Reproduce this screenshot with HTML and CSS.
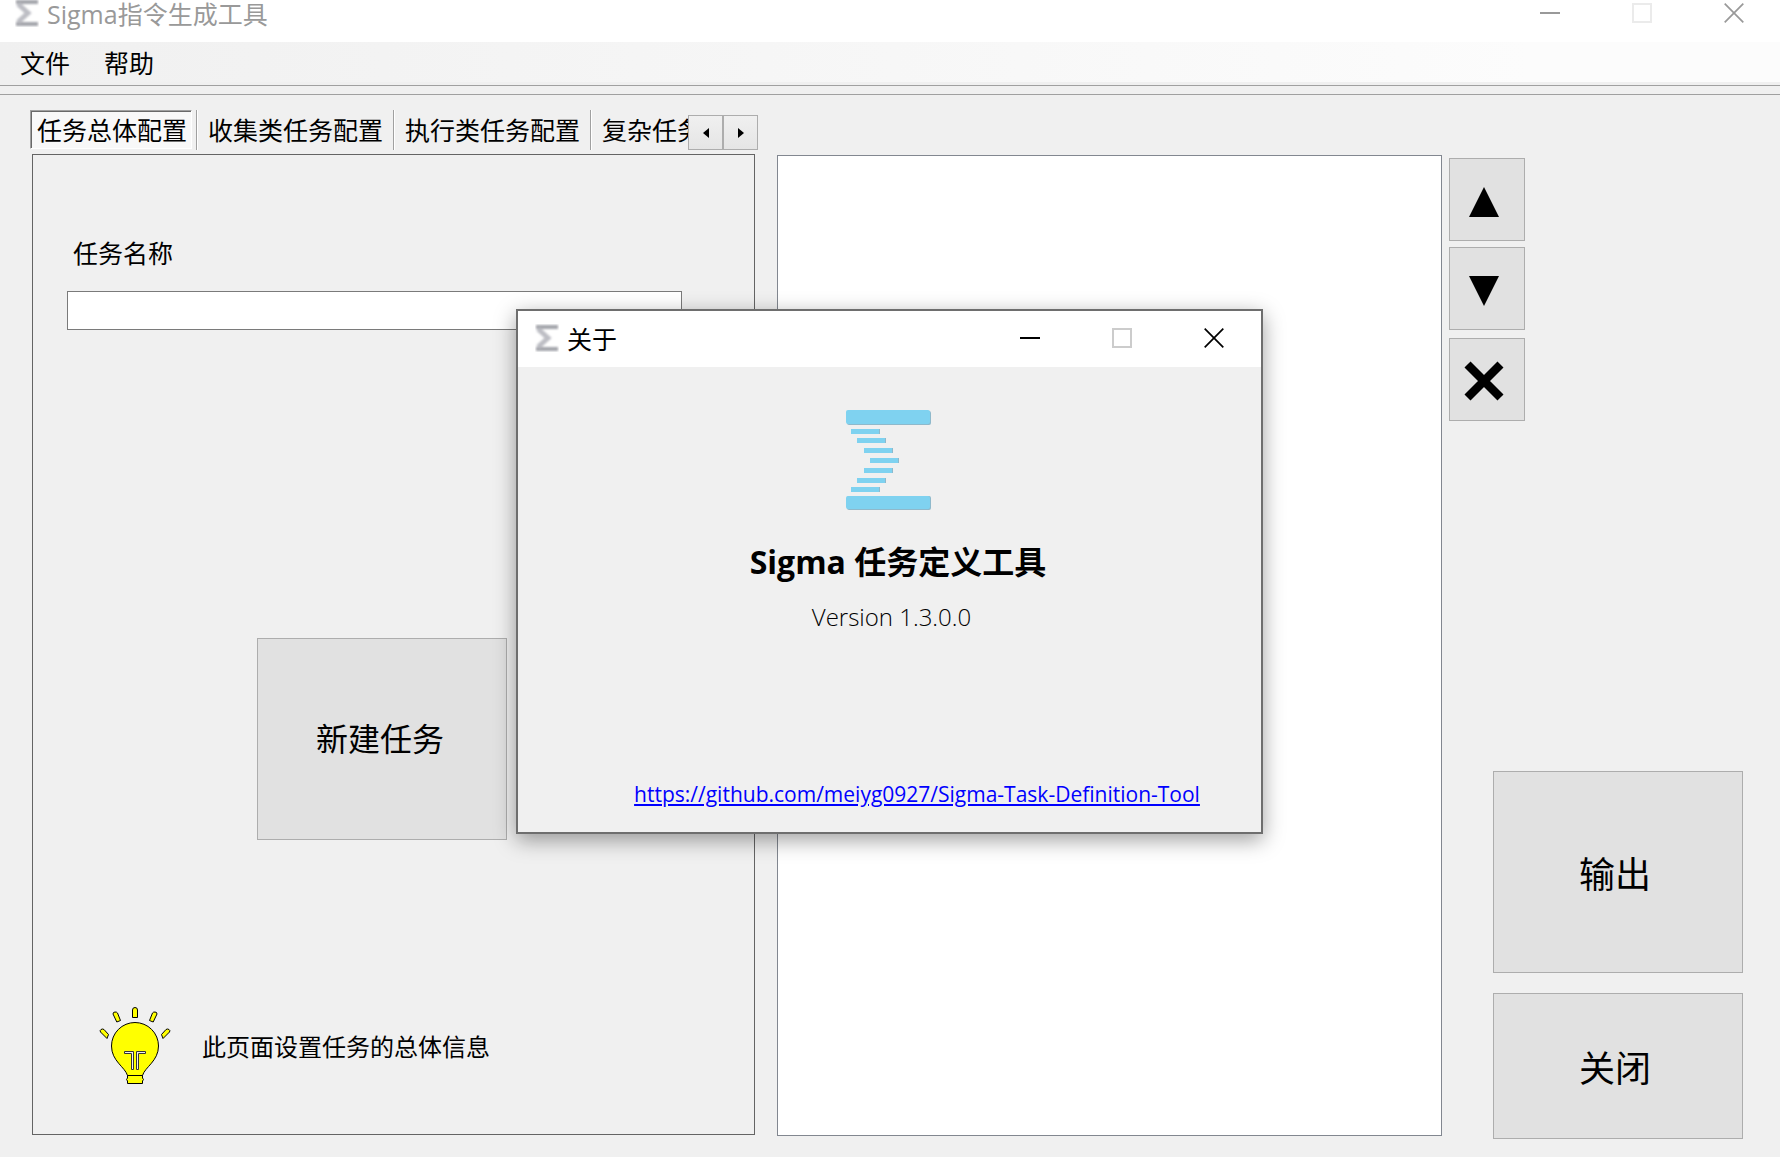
FILE: index.html
```html
<!DOCTYPE html>
<html lang="zh-CN">
<head>
<meta charset="utf-8">
<meta name="viewport" content="width=device-width, initial-scale=1">
<title>Sigma指令生成工具</title>
<link rel="stylesheet" href="styles.css">
</head>
<body>
<svg class="defs" width="0" height="0" aria-hidden="true">
  <defs>
    <filter id="soft" x="-20%" y="-20%" width="140%" height="140%"><feGaussianBlur stdDeviation="0.8"/></filter>
    <symbol id="sigma-small" viewBox="0 0 24 28">
      <g filter="url(#soft)" fill="none">
        <path d="M1 3H23M1 25H23" stroke="#a3a4aa" stroke-width="4"/>
        <path d="M3 5L13 14L3 23" stroke="#bdbec4" stroke-width="5"/>
      </g>
    </symbol>
    <symbol id="win-min" viewBox="0 0 20 20"><path d="M0 10H20" stroke="currentColor" stroke-width="2"/></symbol>
    <symbol id="win-max" viewBox="0 0 20 20"><rect x="1" y="1" width="18" height="18" fill="none" stroke="currentColor" stroke-width="2"/></symbol>
    <symbol id="win-close" viewBox="0 0 20 20"><path d="M.7 .7L19.3 19.3M19.3 .7L.7 19.3" stroke="currentColor" stroke-width="1.7"/></symbol>
  </defs>
</svg>

<div class="window">
  <header class="titlebar titlebar-inactive">
    <svg class="title-icon"><use href="#sigma-small"/></svg>
    <h1 class="title-text">Sigma指令生成工具</h1>
    <div class="window-controls">
      <button class="window-control" type="button" aria-label="最小化"><svg><use href="#win-min"/></svg></button>
      <button class="window-control" type="button" aria-label="最大化" disabled><svg><use href="#win-max"/></svg></button>
      <button class="window-control" type="button" aria-label="关闭窗口"><svg><use href="#win-close"/></svg></button>
    </div>
  </header>

  <nav class="menubar">
    <button class="menu-item" type="button">文件</button>
    <button class="menu-item" type="button">帮助</button>
  </nav>
  <div class="toolbar-edge"></div>

  <main class="workspace">
    <section class="config">
      <div class="tab-strip">
        <div class="tabs" role="tablist">
          <button class="tab tab-selected" type="button" role="tab" aria-selected="true">任务总体配置</button>
          <button class="tab" type="button" role="tab">收集类任务配置</button>
          <button class="tab" type="button" role="tab">执行类任务配置</button>
          <button class="tab" type="button" role="tab">复杂任务配置</button>
        </div>
        <button class="tab-scroll" type="button" aria-label="向左"><svg viewBox="0 0 6 10"><path d="M6 0V10L0 5Z"/></svg></button>
        <button class="tab-scroll" type="button" aria-label="向右"><svg viewBox="0 0 6 10"><path d="M0 0V10L6 5Z"/></svg></button>
      </div>
      <div class="panel" role="tabpanel">
        <label class="field-label" for="task-name">任务名称</label>
        <input class="field-input" id="task-name" type="text">
        <button class="button button-new" type="button">新建任务</button>
        <div class="hint">
          <svg class="bulb" viewBox="0 0 72 78">
            <g fill="#ff0" stroke="#000" stroke-width="1">
              <path d="M28.500 69.500C26 61 12.500 55 12.500 40A23.500 23.500 0 0 1 59.500 40C59.500 55 46 61 43.500 69.500Z"/>
              <path d="M28.500 69.500H43.500V72L44.500 73.500L43.500 75V77.500H28.500V75L27.500 73.500L28.500 72Z"/>
              <path d="M33.500 11.500V4Q33.500 1.500 36 1.500T38.500 4V11.500Z"/>
              <path d="M17.800 16L14 8Q14 6 16 6T18.500 7L21.500 14.500Z"/>
              <path d="M54.200 16L58 8Q58 6 56 6T53.500 7L50.500 14.500Z"/>
              <path d="M8 32.500L1.500 26Q.500 24.500 2 23.500T5 23.500L9.500 28.500Z"/>
              <path d="M64 32.500L70.500 26Q71.500 24.500 70 23.500T67 23.500L62.500 28.500Z"/>
            </g>
            <g stroke="#333" fill="#efefef" stroke-width="1">
              <path d="M25.500 45.500H34.500V63.500H32.500V47.500H25.500Z"/>
              <path d="M46.500 45.500H37.500V63.500H39.500V47.500H46.500Z"/>
            </g>
          </svg>
          <p class="hint-text">此页面设置任务的总体信息</p>
        </div>
      </div>
    </section>

    <section class="task-list" aria-label="任务列表"></section>

    <aside class="actions">
      <button class="button button-square" type="button" aria-label="上移"><svg viewBox="0 0 40 40"><path d="M20 5L35 35H5Z"/></svg></button>
      <button class="button button-square" type="button" aria-label="下移"><svg viewBox="0 0 40 40"><path d="M5 5H35L20 35Z"/></svg></button>
      <button class="button button-square button-delete" type="button" aria-label="删除"><svg viewBox="0 0 40 40"><path d="M3.500 3.500L36.500 36.500M36.500 3.500L3.500 36.500" stroke="#000" stroke-width="8.500"/></svg></button>
      <button class="button button-export" type="button">输出</button>
      <button class="button button-close" type="button">关闭</button>
    </aside>
  </main>
</div>

<div class="dialog" role="dialog" aria-labelledby="about-title">
  <header class="titlebar titlebar-dialog">
    <svg class="title-icon"><use href="#sigma-small"/></svg>
    <h2 class="title-text" id="about-title">关于</h2>
    <div class="window-controls">
      <button class="window-control" type="button" aria-label="最小化"><svg><use href="#win-min"/></svg></button>
      <button class="window-control" type="button" aria-label="最大化" disabled><svg><use href="#win-max"/></svg></button>
      <button class="window-control" type="button" aria-label="关闭对话框"><svg><use href="#win-close"/></svg></button>
    </div>
  </header>
  <div class="about">
    <svg class="logo" viewBox="0 0 85 100">
      <g fill="#8fb9cb">
        <rect x="1" y="1" width="84" height="14" rx="2"/>
        <rect x="5" y="19" width="29" height="5"/><rect x="12" y="28" width="28" height="5"/><rect x="19" y="38" width="28" height="5"/>
        <rect x="25" y="48" width="28" height="5"/><rect x="19" y="58" width="28" height="5"/><rect x="12" y="68" width="28" height="5"/><rect x="5" y="77" width="29" height="5"/>
        <rect x="1" y="86" width="84" height="14" rx="2"/>
      </g>
      <g fill="#7fd2f0">
        <rect x="0" y="0" width="84" height="14" rx="2"/>
        <rect x="5" y="19" width="28" height="5"/><rect x="11" y="28" width="28" height="5"/><rect x="18" y="38" width="28" height="5"/>
        <rect x="24" y="48" width="28" height="5"/><rect x="18" y="58" width="28" height="5"/><rect x="11" y="68" width="28" height="5"/><rect x="5" y="77" width="28" height="5"/>
        <rect x="0" y="86" width="84" height="13" rx="2"/>
      </g>
    </svg>
    <h3 class="about-name">Sigma 任务定义工具</h3>
    <p class="about-version">Version 1.3.0.0</p>
    <a class="about-link" href="https://github.com/meiyg0927/Sigma-Task-Definition-Tool">https://github.com/meiyg0927/Sigma-Task-Definition-Tool</a>
  </div>
</div>
</body>
</html>
```
FILE: styles.css
```css
* {
  box-sizing: border-box;
}

body {
  position: relative;
  min-height: 100vh;
  margin: 0;
  background: #fff;
  color: #000;
  font: 25px/36px "Open Sans", "Noto Sans CJK SC", sans-serif;
}

h1, h2, h3, p {
  margin: 0;
  font-weight: 400;
}

button {
  margin: 0;
  padding: 0;
  border: 0;
  background: none;
  color: inherit;
  font: inherit;
}

.defs {
  position: absolute;
}

.window {
  display: flex;
  flex-direction: column;
  min-height: 100vh;
  border-bottom: 1px solid #fff;
  background: #f0f0f0;
}

/* Title bars */
.titlebar {
  display: flex;
  align-items: center;
  background: #fff;
}

.titlebar-inactive {
  height: 42px;
  padding: 0 0 16px 15px;
  color: #999;
}

.titlebar-dialog {
  height: 56px;
  padding: 0 1px 2px 17px;
}

.title-icon {
  width: 24px;
  height: 28px;
  flex: none;
}

.title-text {
  flex: 1;
  padding: 2px 0 0 8px;
  font-size: 25px;
  line-height: 26px;
  white-space: nowrap;
}

.window-controls {
  display: flex;
}

.window-control {
  display: flex;
  justify-content: center;
  align-items: center;
  width: 92px;
  height: 26px;
}

.window-control svg {
  width: 20px;
  height: 20px;
}

.window-control:disabled {
  color: #ccc;
}

.titlebar-inactive .window-control:disabled {
  color: #ebebeb;
}

/* Menu */
.menubar {
  display: flex;
  gap: 34px;
  height: 40px;
  padding-left: 20px;
  background: linear-gradient(to right, #f0f0f0, #fcfcfc 86%);
}

.menu-item {
  line-height: 42px;
}

.toolbar-edge {
  height: 10px;
  margin-top: 3px;
  border: solid #a0a0a0;
  border-width: 1px 0;
}

/* Workspace */
.workspace {
  flex: 1;
  display: grid;
  grid-template-columns: minmax(0, 725fr) minmax(0, 687fr) 301px;
  padding: 15px 37px 18px 30px;
}

.config {
  display: flex;
  flex-direction: column;
  gap: 4px;
  padding-bottom: 4px;
}

.tab-strip {
  display: flex;
  align-items: flex-end;
  height: 40px;
  margin-right: -3px;
}

.tabs {
  flex: 1;
  display: flex;
  height: 40px;
  overflow: hidden;
}

.tab {
  flex: none;
  height: 40px;
  padding: 0 10px 0 11px;
  border-left: 1px solid #a0a0a0;
  box-shadow: inset 1px 0 #fff;
  line-height: 38px;
  white-space: nowrap;
}

.tab-selected {
  height: 39px;
  margin-right: 4px;
  padding: 0 4px 0 6px;
  border: solid #fff;
  border-width: 1px;
  border-top-color: #a0a0a0;
  border-left-color: #a0a0a0;
  background: #f8f8f8;
  box-shadow: inset 1px 1px #696969;
}

.tab-scroll {
  display: flex;
  justify-content: center;
  align-items: center;
  width: 35px;
  height: 35px;
  border: 1px solid #adadad;
  background: linear-gradient(#f0f0f0, #e5e5e5);
}

.tab-scroll svg {
  width: 6px;
  height: 10px;
}

.panel {
  flex: 1;
  display: flex;
  flex-direction: column;
  margin-left: 2px;
  padding: 80px 72px 50px 34px;
  border: 1px solid #646464;
}

.field-label {
  padding-left: 6px;
}

.field-input {
  width: 100%;
  height: 39px;
  margin-top: 20px;
  padding: 0 8px;
  border: 1px solid #7a7a7a;
  background: #fff;
  font: inherit;
}

.button {
  border: 1px solid #adadad;
  background: #e1e1e1;
}

.button-new {
  width: 250px;
  height: 202px;
  margin: auto 0 166px 190px;
  padding-right: 4px;
  font-size: 32px;
}

.hint {
  display: flex;
  align-items: center;
  gap: 31px;
  padding-left: 32px;
}

.bulb {
  width: 72px;
  height: 78px;
}

.hint-text {
  padding-top: 4px;
  font-size: 24px;
}

.task-list {
  margin: 45px 0 3px 22px;
  border: 1px solid #828790;
  background: #fff;
}

.actions {
  display: flex;
  flex-direction: column;
  gap: 6px;
  padding: 48px 0 0 7px;
}

.button-square {
  display: flex;
  justify-content: center;
  align-items: center;
  width: 76px;
  height: 83px;
  padding: 4px 6px 0 0;
}

.button-square svg {
  width: 40px;
  height: 40px;
}

.button-delete {
  margin-top: 2px;
  padding-top: 2px;
}

.button-export,
.button-close {
  align-self: flex-end;
  width: 250px;
  padding: 6px 6px 0 0;
  font-size: 36px;
}

.button-export {
  height: 202px;
  margin-top: auto;
}

.button-close {
  height: 146px;
  margin-top: 14px;
}

/* About dialog, floating over the main window */
.dialog {
  position: absolute;
  top: 309px;
  left: calc(50% - 374px);
  width: 747px;
  border: 2px solid #6e6e6e;
  background: #f0f0f0;
  box-shadow: 0 6px 20px rgba(0, 0, 0, 0.38);
}

.about {
  display: flex;
  flex-direction: column;
  align-items: center;
  padding: 43px 0 20px;
}

.logo {
  width: 85px;
  height: 100px;
  margin-right: 2px;
}

.about-name {
  margin-top: 30px;
  padding-left: 17px;
  font-size: 32px;
  font-weight: 700;
  line-height: 44px;
}

.about-version {
  margin-top: 15px;
  padding-left: 4px;
  font-size: 24px;
  font-weight: 300;
}

.about-link {
  margin-top: 141px;
  padding-left: 55px;
  color: #00f;
  font-size: 21px;
}
```
